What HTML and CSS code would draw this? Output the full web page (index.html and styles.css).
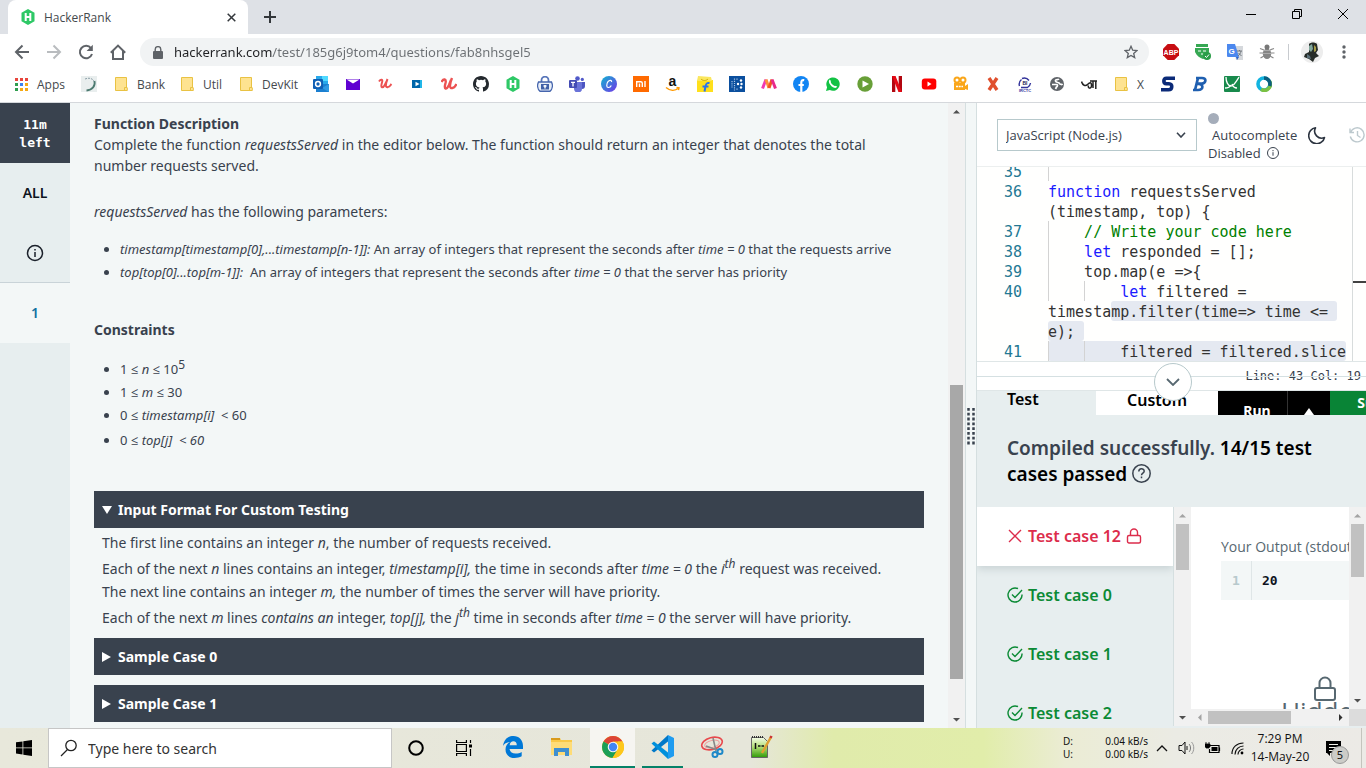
FILE: index.html
```html
<!DOCTYPE html>
<html lang="en">
<head>
<meta charset="utf-8">
<title>HackerRank</title>
<link rel="stylesheet" href="styles.css">
</head>
<body>
<div class="screen">
  <header class="browser">
    <div class="titlebar">
      <div class="tab">
        <svg class="i16" viewBox="0 0 16 16"><path d="M8 0l6.500 3.700v8.600L8 16l-6.500-3.700V3.700z" fill="#2ec866"/><path d="M5.700 4v8M10.300 4v8M5.700 8h4.600" stroke="#fff" stroke-width="2"/></svg>
        <span class="tab-title">HackerRank</span>
        <button class="plain" aria-label="Close tab"><svg width="9" height="9" viewBox="0 0 9 9"><path d="M.7.7l7.600 7.600M8.300.7L.7 8.300" stroke="#33373b" stroke-width="1.500"/></svg></button>
      </div>
      <button class="plain newtab" aria-label="New tab"><svg width="12" height="12" viewBox="0 0 12 12"><path d="M6 0v12M0 6h12" stroke="#33373b" stroke-width="2"/></svg></button>
      <div class="win">
        <button class="plain" aria-label="Minimize"><svg width="10" height="10" viewBox="0 0 10 10"><path d="M0 5.500h10" stroke="#000"/></svg></button>
        <button class="plain" aria-label="Restore"><svg width="10" height="10" viewBox="0 0 10 10" fill="none" stroke="#000"><path d="M.5 2.500h7v7h-7zM2.500 2.500v-2h7v7h-2"/></svg></button>
        <button class="plain" aria-label="Close"><svg width="10" height="10" viewBox="0 0 10 10"><path d="M0 0l10 10M10 0L0 10" stroke="#000"/></svg></button>
      </div>
    </div>
    <div class="toolbar">
      <nav class="navs">
        <button class="plain" aria-label="Back"><svg class="i16" viewBox="0 0 16 16" fill="none" stroke="#5f6368" stroke-width="2"><path d="M15 8H2M8.500 1.500L2 8l6.500 6.500"/></svg></button>
        <button class="plain" aria-label="Forward"><svg class="i16" viewBox="0 0 16 16" fill="none" stroke="#b9bcbf" stroke-width="2"><path d="M1 8h13M7.500 1.500L14 8l-6.500 6.500"/></svg></button>
        <button class="plain" aria-label="Reload"><svg class="i16" viewBox="0 0 16 16" fill="none" stroke="#5f6368" stroke-width="2"><path d="M13 4.200A6.200 6.200 0 1 0 14 10"/><path d="M14.800.8v6.200H8.600z" fill="#5f6368" stroke="none"/></svg></button>
        <button class="plain" aria-label="Home"><svg class="i16" viewBox="0 0 16 16" fill="none" stroke="#5f6368" stroke-width="2"><path d="M.8 8.800L8 1.600l7.200 7.200M3 7v8h10V7"/></svg></button>
      </nav>
      <div class="omni">
        <svg width="10" height="13" viewBox="0 0 10 13"><path d="M1 5h8a1 1 0 0 1 1 1v6a1 1 0 0 1-1 1H1a1 1 0 0 1-1-1V6a1 1 0 0 1 1-1z" fill="#5f6368"/><path d="M2.200 5V3.400a2.800 2.800 0 0 1 5.600 0V5" fill="none" stroke="#5f6368" stroke-width="1.400"/></svg>
        <input class="url" type="text" aria-label="Address" value="hackerrank.com/test/185g6j9tom4/questions/fab8nhsgel5">
        <button class="plain" aria-label="Bookmark"><svg width="14" height="14" viewBox="0 0 14 14"><path d="M7 1.300l1.700 3.900 4.200.4-3.200 2.800 1 4.200L7 10.400l-3.700 2.200 1-4.200L1.100 5.600l4.200-.4z" fill="none" stroke="#5f6368" stroke-width="1.300"/></svg></button>
      </div>
      <div class="exts">
        <svg class="i16" viewBox="0 0 16 16"><path d="M4.700 0h6.600L16 4.700v6.600L11.300 16H4.700L0 11.300V4.700z" fill="#c70d12"/><text x="8" y="10.700" font-size="7" font-weight="700" fill="#fff" text-anchor="middle">ABP</text></svg>
        <svg class="i16" viewBox="0 0 16 16"><path d="M1 0h12v3H1zM0 4h14v3c0 4-3 7-6 8-3-1-6-3-8-7z" fill="#36a853"/><path d="M3 7h3M8 7h3M7 9v2" stroke="#fff"/><circle cx="12" cy="12" r="4" fill="#2a9d48"/><path d="M10 12l1.500 1.500 2.500-3" fill="none" stroke="#fff"/></svg>
        <svg class="i16" viewBox="0 0 16 16"><path d="M6 2h10v14H9z" fill="#d5d8dc"/><path d="M0 0h8l4 13H1a1 1 0 0 1-1-1z" fill="#4c88ee"/><path d="M9 13l3 0-2 3z" fill="#2e62c8"/><text x="4.500" y="9.500" font-size="8" font-weight="700" fill="#fff" text-anchor="middle">G</text><path d="M10 7h5M12.500 6v1M14 7c0 2-2 4-3 5M11.500 9l3 3" stroke="#70777d" fill="none"/></svg>
        <svg class="i16" viewBox="0 0 16 16"><g stroke="#8a8a8a" stroke-width="1.200" fill="none"><path d="M5 6L1 4.500M4 9H.5M5 12l-3.500 2M11 6l4-1.500M12 9h3.500M11 12l3.500 2"/></g><ellipse cx="8" cy="9.800" rx="4.200" ry="5.200" fill="#858585"/><circle cx="8" cy="3" r="2.500" fill="#777"/><path d="M4 6.500h8M4 9.500h8" stroke="#bbb" stroke-width=".7"/></svg>
        <span class="vsep"></span>
        <svg class="avatar" viewBox="0 0 22 22"><circle cx="11" cy="11" r="11" fill="#ededed"/><path d="M8 3c2-2 6-2 8 0l1 6-2 3 3 3-4 2-2 4-4-3-5-2 1-3 4-2z" fill="#252b27"/><path d="M8 5l3-2 1 5-2 3-2-2z" fill="#7fa59a"/><path d="M13 4l2 2v4l-2 1z" fill="#a39a45"/><path d="M6 13l3 2 1 3-4-1z" fill="#5a6f78"/></svg>
        <svg class="dots" width="4" height="14" viewBox="0 0 4 14" fill="#5f6368"><circle cx="2" cy="2" r="1.700"/><circle cx="2" cy="7" r="1.700"/><circle cx="2" cy="12" r="1.700"/></svg>
      </div>
    </div>
    <nav class="bookmarks">
      <a class="bm apps" href="#"><svg class="i16" viewBox="0 0 16 16"><path d="M2 2h3v3H2zM7 2h3v3H7zM12 2h3v3h-3z" fill="#e8453c"/><path d="M2 7h3v3H2zM2 12h3v3H2z" fill="#2f9e4f"/><path d="M7 7h3v3H7z" fill="#3b82f0"/><path d="M12 7h3v3h-3zM7 12h3v3H7zM12 12h3v3h-3z" fill="#f5a913"/></svg>Apps</a>
      <a class="bm" href="#" aria-label="Spinner"><svg class="i16" viewBox="0 0 16 16"><path d="M0 0h16v16H0z" fill="#e9eeee"/><path d="M4 3c5-2 9 0 9.500 4" fill="none" stroke="#8da0a8" stroke-dasharray="2 1"/><path d="M13.500 5c1 5-2 9-8 9.500" fill="none" stroke="#4c7a70" stroke-width="1.800"/></svg></a>
      <a class="bm folder bank" href="#"><svg class="i16" viewBox="0 0 16 16"><path d="M2.500 1.500h11V11l.8 1v2.500H2.500z" fill="#fee391" stroke="#e9c243"/><path d="M11.500 14.500v-3h2.500" fill="none" stroke="#e9c243"/></svg>Bank</a>
      <a class="bm folder util" href="#"><svg class="i16" viewBox="0 0 16 16"><path d="M2.500 1.500h11V11l.8 1v2.500H2.500z" fill="#fee391" stroke="#e9c243"/><path d="M11.500 14.500v-3h2.500" fill="none" stroke="#e9c243"/></svg>Util</a>
      <a class="bm folder devkit" href="#"><svg class="i16" viewBox="0 0 16 16"><path d="M2.500 1.500h11V11l.8 1v2.500H2.500z" fill="#fee391" stroke="#e9c243"/><path d="M11.500 14.500v-3h2.500" fill="none" stroke="#e9c243"/></svg>DevKit</a>
      <a class="bm" href="#" aria-label="Outlook"><svg class="i16" viewBox="0 0 16 16"><path d="M3 0h12v8H3z" fill="#28a8ea"/><path d="M9 0h6v5H9z" fill="#50d9ff"/><path d="M3 8h13v8H3z" fill="#1b7fd0"/><path d="M16 8v8L9 12z" fill="#2f9ae3"/><rect y="3" width="10" height="10" rx="1" fill="#0f5fb5"/><circle cx="5" cy="8" r="2.400" fill="none" stroke="#fff" stroke-width="1.500"/></svg></a>
      <a class="bm" href="#" aria-label="Mail"><svg class="i16" viewBox="0 0 16 16"><path d="M1 3h14v11H1z" fill="#5f01d1"/><path d="M1.500 3.500h13L8 7.500z" fill="#fff"/></svg></a>
      <a class="bm" href="#" aria-label="Udemy"><svg class="i16" viewBox="0 0 16 16"><path d="M2 5.500c2-3 4-2 3 1-2 6 1 6 3 2l2-4M10.500 3c-2.500 6-2 9 .5 8 2 0 2.500-2 3.500-3" fill="none" stroke="#ec5252" stroke-width="2"/></svg></a>
      <a class="bm" href="#" aria-label="Video"><svg class="i16" viewBox="0 0 16 16"><path d="M3 4h10v8H3z" fill="#06a"/><path d="M11 4h2v8h-2z" fill="#21b6e8"/><path d="M6.500 5.800L10.500 8l-4 2.200z" fill="#fff"/></svg></a>
      <a class="bm" href="#" aria-label="Udemy courses"><svg class="i16" viewBox="0 0 16 16"><path d="M.5 6c2-4 5-3 4 1-2 7 1 7 3.500 2l2-5M11 2c-3 7-2.500 11 .5 10 2 0 3-2 4-4" fill="none" stroke="#ec5252" stroke-width="2.400"/></svg></a>
      <a class="bm" href="#" aria-label="GitHub"><svg class="i16" viewBox="0 0 16 16"><path fill="#24292e" d="M8 0C3.580 0 0 3.580 0 8c0 3.540 2.290 6.530 5.470 7.590.4.070.55-.17.55-.38 0-.19-.01-.82-.01-1.490-2.010.37-2.530-.49-2.690-.94-.09-.23-.48-.94-.82-1.130-.28-.15-.68-.52-.01-.53.63-.01 1.080.58 1.230.82.72 1.210 1.870.87 2.330.66.07-.52.28-.87.51-1.070-1.780-.2-3.640-.89-3.640-3.950 0-.87.31-1.590.82-2.150-.08-.2-.36-1.020.08-2.120 0 0 .67-.21 2.200.82a7.600 7.600 0 0 1 4 0c1.530-1.040 2.200-.82 2.200-.82.44 1.100.16 1.920.08 2.120.51.56.82 1.270.82 2.150 0 3.070-1.870 3.750-3.650 3.950.29.25.54.73.54 1.480 0 1.070-.01 1.930-.01 2.200 0 .21.15.46.55.38A8.010 8.010 0 0 0 16 8c0-4.420-3.580-8-8-8z"/></svg></a>
      <a class="bm" href="#" aria-label="HackerRank"><svg class="i16" viewBox="0 0 16 16"><path d="M8 0l6.500 3.700v8.600L8 16l-6.500-3.700V3.700z" fill="#2ec866"/><path d="M5.700 4v8M10.300 4v8M5.700 8h4.600" stroke="#fff" stroke-width="2"/></svg></a>
      <a class="bm" href="#" aria-label="Vault"><svg class="i16" viewBox="0 0 16 16"><path d="M4.500 6V4.200a3.500 3.500 0 0 1 7 0V6" fill="none" stroke="#5674b9" stroke-width="1.800"/><path d="M1.500 6h13c1.500 3 1 7-1.500 9.300H3C.5 13 0 9 1.500 6z" fill="#e8eef8" stroke="#4565ad" stroke-width="1.400"/><path d="M4 8h8v5.500H4z" fill="#4060a8"/><path d="M8 9v3.500M6.500 10h3" stroke="#fff" stroke-width="1.400"/></svg></a>
      <a class="bm" href="#" aria-label="Teams"><svg class="i16" viewBox="0 0 16 16"><circle cx="8.500" cy="2.500" r="2.300" fill="#5059c9"/><circle cx="13.300" cy="3.400" r="1.600" fill="#5059c9"/><path d="M5 6h8v6a4 4 0 0 1-8 1z" fill="#6a73d8"/><path d="M13 6h3v4c0 2-1 3-3 3z" fill="#4c55c2"/><rect y="4" width="8" height="8" rx="1" fill="#434bb4"/><path d="M2 6.300h4M4 6v4.500" stroke="#fff" stroke-width="1.300"/></svg></a>
      <a class="bm" href="#" aria-label="Canva"><svg class="i16" viewBox="0 0 16 16"><defs><linearGradient id="cv" x2="1" y2="1"><stop offset="0" stop-color="#0fb5d0"/><stop offset="1" stop-color="#7434e8"/></linearGradient></defs><circle cx="8" cy="8" r="8" fill="url(#cv)"/><path d="M10.500 6c.5-2-2-2.300-3.500-.3-2 2.800-1.500 6 .5 5.800 1.300-.1 2.300-1 2.800-2" fill="none" stroke="#fff" stroke-width="1.200"/></svg></a>
      <a class="bm" href="#" aria-label="Mi"><svg class="i16" viewBox="0 0 16 16"><path d="M0 0h16v16H0z" fill="#ff6a00"/><path d="M3.700 11V5.700h4c1 0 1.600.5 1.600 1.600V11M6.500 7.500V11M12 5v6" stroke="#fff" stroke-width="1.400" fill="none"/></svg></a>
      <a class="bm" href="#" aria-label="Amazon"><svg class="i16" viewBox="0 0 16 16"><text x="7.500" y="10" font-size="14" font-weight="700" fill="#111" text-anchor="middle">a</text><path d="M1 11.500c4 3.500 9 3.500 12.500.8M11.500 11.500l2.500.3-.5 2.400" stroke="#f90" stroke-width="1.400" fill="none"/></svg></a>
      <a class="bm" href="#" aria-label="Flipkart"><svg class="i16" viewBox="0 0 16 16"><path d="M0 4h16v12H0z" fill="#ffe01b"/><path d="M1 0l13 1 1 4H0z" fill="#fbe75e"/><path d="M4 3c2 2 5 2 7 0" stroke="#c9a800" fill="none"/><path d="M12.500 7c-3-.5-3.500 1-4 3.500l-1 5M5.500 10.500h6" stroke="#2874f0" stroke-width="2" fill="none"/></svg></a>
      <a class="bm" href="#" aria-label="Dots"><svg class="i16" viewBox="0 0 16 16"><path d="M0 0h16v16H0z" fill="#0b4f9e"/><path d="M3 5v7M5.500 2.500v12M8 2.500v2M8 12.500v2" stroke="#a8c4e4" stroke-width="1.200" stroke-dasharray="1.200 1"/><circle cx="9" cy="8" r="1.200" fill="#fff"/><circle cx="12" cy="4.500" r="1.200" fill="#fff"/><circle cx="12.500" cy="8" r="1.200" fill="#fff"/><circle cx="12" cy="11.500" r="1.200" fill="#fff"/></svg></a>
      <a class="bm" href="#" aria-label="Myntra"><svg class="i16" viewBox="0 0 16 16"><path d="M1.500 12.500L5 3.500" stroke="#f13ab1" stroke-width="3"/><path d="M5 3.500l3 8.500" stroke="#fd913c" stroke-width="3"/><path d="M8 12l3-8.500" stroke="#f05524" stroke-width="3"/><path d="M11 3.500l3.500 9" stroke="#e82a8a" stroke-width="3"/></svg></a>
      <a class="bm" href="#" aria-label="Facebook"><svg class="i16" viewBox="0 0 16 16"><circle cx="8" cy="8" r="8" fill="#1285f3"/><path d="M11.200 4.200C8.800 3.700 8.300 5 8.300 7v9M5.500 9h5.300" stroke="#fff" stroke-width="2.200" fill="none"/></svg></a>
      <a class="bm" href="#" aria-label="WhatsApp"><svg class="i16" viewBox="0 0 16 16"><path d="M1 15l1.100-3.700A6.700 6.700 0 1 1 4.800 14z" fill="#12c244"/><path d="M5.300 4.300c-1.300 1.200 0 3.600 1.800 5.200 1.600 1.400 3.500 2 4.400.8" fill="none" stroke="#fff" stroke-width="1.900"/></svg></a>
      <a class="bm" href="#" aria-label="Player"><svg class="i16" viewBox="0 0 16 16"><circle cx="8" cy="8" r="7.700" fill="#689f38"/><path d="M5.500 4.500L12 8l-6.500 3.500z" fill="#fff"/></svg></a>
      <a class="bm" href="#" aria-label="Netflix"><svg class="i16" viewBox="0 0 16 16"><path d="M3 0h3.300v16H3zM9.700 0H13v16H9.700z" fill="#b20710"/><path d="M3 0h3.500L13 16H9.500z" fill="#e50914"/></svg></a>
      <a class="bm" href="#" aria-label="YouTube"><svg class="i16" viewBox="0 0 16 16"><rect x=".8" y="2.500" width="14.500" height="11" rx="3" fill="#f00"/><path d="M6.500 5.500L10.500 8l-4 2.500z" fill="#fff"/></svg></a>
      <a class="bm" href="#" aria-label="Movies"><svg class="i16" viewBox="0 0 16 16"><circle cx="4" cy="4" r="2.500" fill="none" stroke="#faa61a" stroke-width="2"/><circle cx="10" cy="4" r="2.500" fill="none" stroke="#faa61a" stroke-width="2"/><path d="M1 7h11v7H1zM12 10l3-2v6l-3-1z" fill="#faa61a"/><path d="M3 10.500h7" stroke="#fff" stroke-width="1.500" stroke-dasharray="2 .7"/></svg></a>
      <a class="bm" href="#" aria-label="X"><svg class="i16" viewBox="0 0 16 16"><path d="M4 2l8 12M12 2L4 14" stroke="#e0502e" stroke-width="3.400"/></svg></a>
      <a class="bm" href="#" aria-label="IRCTC"><svg class="i16" viewBox="0 0 16 16"><path d="M5 2.500a6 6 0 0 1 7 2M2.500 10a6 6 0 0 1 2-6.500M13.500 7a6 6 0 0 1-3 4.500H4" fill="none" stroke="#32329a" stroke-width="1.400"/><text x="8" y="8.500" font-size="5" font-weight="700" fill="#225" text-anchor="middle">BI</text><text x="8" y="16" font-size="4" font-weight="700" fill="#32329a" text-anchor="middle">IRCTC</text></svg></a>
      <a class="bm" href="#" aria-label="Globe"><svg class="i16" viewBox="0 0 16 16"><circle cx="8" cy="8" r="7" fill="#5f6368"/><path d="M10 3c-1 1-4 0-3.500 2S10 6 10.500 7.500 13 8 13.500 9M3 8.500h4.500c1.500 0 1 2 0 2.500L6.500 13" fill="none" stroke="#fff" stroke-width="1.700"/></svg></a>
      <a class="bm" href="#" aria-label="Script"><svg class="i16" viewBox="0 0 16 16"><path d="M.5 5.500c1 4 4 5 6 3s4-3 4 1-4 3-3 0M9 5h7M12 5v7M14.800 5v8" fill="none" stroke="#222" stroke-width="1.500"/></svg></a>
      <a class="bm folder xf" href="#"><svg class="i16" viewBox="0 0 16 16"><path d="M2.500 1.500h11V11l.8 1v2.500H2.500z" fill="#fee391" stroke="#e9c243"/><path d="M11.500 14.500v-3h2.500" fill="none" stroke="#e9c243"/></svg>X</a>
      <a class="bm" href="#" aria-label="S"><svg class="i16" viewBox="0 0 16 16"><path d="M15 2.200H6.500C3 2.200 3 7.500 6.500 7.800h2.500c4 0 3.500 6-.5 6H1" fill="none" stroke="#0b2a78" stroke-width="3.600"/></svg></a>
      <a class="bm" href="#" aria-label="B"><svg class="i16" viewBox="0 0 16 16"><path d="M4 2h6c5 0 4 5 0 5.700H5c7 0 7 6.300 1 6.300H1M6 2L3 14" fill="none" stroke="#1f5fb0" stroke-width="2.700"/></svg></a>
      <a class="bm" href="#" aria-label="W"><svg class="i16" viewBox="0 0 16 16"><rect width="16" height="16" rx="1" fill="#188a4c"/><path d="M2 1c0 5 2 9 5 9s5-4 8-9M8 8c1 3 3 4 5 4M1 12c3 0 5-1 6-3" fill="none" stroke="#fff" stroke-width="1.300"/></svg></a>
      <a class="bm" href="#" aria-label="Webex"><svg class="i16" viewBox="0 0 16 16"><circle cx="8" cy="8" r="6" fill="#fff" stroke="#12b4e0" stroke-width="3.600"/><path d="M13.300 5A6 6 0 0 1 5 13.300" fill="none" stroke="#7bc143" stroke-width="3.600"/><path d="M8 2a6 6 0 0 1 5.600 8" fill="none" stroke="#0c5e7e" stroke-width="3.600"/></svg></a>
    </nav>
  </header>

  <main class="app">
    <aside class="rail">
      <div class="timer">11m<br>left</div>
      <a class="rail-item" href="#">ALL</a>
      <button class="rail-item info" aria-label="Info"><svg width="18" height="18" viewBox="0 0 18 18" fill="none" stroke="#1b212b" stroke-width="1.500"><circle cx="9" cy="9" r="7.500"/><path d="M9 8v5M9 5v1.500"/></svg></button>
      <a class="rail-item current" href="#">1</a>
    </aside>

    <section class="problem">
      <div class="statement">
        <h3>Function Description</h3>
        <p>Complete the function <i>requestsServed</i> in the editor below. The function should return an integer that denotes the total<br>number requests served.</p>
        <p class="params"><i>requestsServed</i> has the following parameters:</p>
        <ul>
          <li><i>timestamp[timestamp[0],...timestamp[n-1]]:</i> An array of integers that represent the seconds after <i>time = 0</i> that the requests arrive</li>
          <li><i>top[top[0]...top[m-1]]:</i>&nbsp; An array of integers that represent the seconds after <i>time = 0</i> that the server has priority</li>
        </ul>
        <h3 class="constraints">Constraints</h3>
        <ul>
          <li>1 ≤ <i>n</i> ≤ 10<sup>5</sup></li>
          <li>1 ≤ <i>m</i> ≤ 30</li>
          <li>0 ≤ <i>timestamp[i]</i>&nbsp; &lt; 60</li>
          <li class="last">0 ≤ <i>top[j]&nbsp; &lt; 60</i></li>
        </ul>
        <details class="case" open>
          <summary><svg width="10" height="10" viewBox="0 0 10 10"><path d="M0 1h10L5 9z" fill="#fff"/></svg>Input Format For Custom Testing</summary>
          <div class="case-body">
            <p>The first line contains an integer <i>n</i>, the number of requests received.</p>
            <p class="tall">Each of the next <i>n</i> lines contains an integer, <i>timestamp[i],</i> the time in seconds after <i>time = 0</i> the <i>i<sup>th</sup></i> request was received.</p>
            <p>The next line contains an integer <i>m,</i> the number of times the server will have priority.</p>
            <p class="tall">Each of the next <i>m</i> lines <i>contains an</i> integer, <i>top[j],</i> the <i>j<sup>th</sup></i> time in seconds after <i>time = 0</i> the server will have priority.</p>
          </div>
        </details>
        <details class="case"><summary><svg width="10" height="10" viewBox="0 0 10 10"><path d="M0 0l9 5-9 5z" fill="#fff"/></svg>Sample Case 0</summary></details>
        <details class="case"><summary><svg width="10" height="10" viewBox="0 0 10 10"><path d="M0 0l9 5-9 5z" fill="#fff"/></svg>Sample Case 1</summary></details>
      </div>
      <div class="vbar">
        <svg class="arr" viewBox="0 0 17 17"><path d="M5 10.500h7L8.500 7z" fill="#505050"/></svg>
        <div class="track"><div class="gap-main"></div><div class="thumb dark main-thumb"></div></div>
        <svg class="arr" viewBox="0 0 17 17"><path d="M5 7h7l-3.500 3.500z" fill="#505050"/></svg>
      </div>
    </section>

    <div class="splitter"><svg width="8" height="37" viewBox="0 0 8 37"><path d="M1.500 0v37M6.500 0v37" stroke="#39424e" stroke-width="2.500" stroke-dasharray="2.800 2"/></svg></div>

    <section class="work">
      <div class="tools">
        <div class="lang"><select aria-label="Language"><option>JavaScript (Node.js)</option></select><svg width="10" height="6" viewBox="0 0 10 6"><path d="M1 .8L5 5l4-4.200" fill="none" stroke="#39424e" stroke-width="1.600"/></svg></div>
        <div class="auto">
          <span class="knob"></span>
          <span class="auto-a">Autocomplete</span>
          <span class="auto-b">Disabled <svg width="12" height="12" viewBox="0 0 12 12" fill="none" stroke="#39424e"><circle cx="6" cy="6" r="5.500"/><path d="M6 5.200v3.500M6 3v1.200"/></svg></span>
        </div>
        <button class="plain moon" aria-label="Theme"><svg width="18" height="18" viewBox="0 0 18 18"><path d="M7.500 1.800A7 7 0 0 0 16.500 11.500 8 8 0 1 1 7.500 1.800z" fill="none" stroke="#2c3440" stroke-width="1.600" stroke-linejoin="round"/></svg></button>
        <button class="plain hist" aria-label="History"><svg width="16" height="16" viewBox="0 0 16 16" fill="none" stroke="#bdc9ce" stroke-width="1.400"><path d="M1 1.500v4h4M1.500 5.500A7 7 0 1 1 1.300 9.500M8.500 4v4.500l3 2"/></svg></button>
      </div>
      <div class="editor">
        <div class="code">
          <div class="row"><span class="ln">35</span><span class="src"><span class="ind"></span></span></div>
          <div class="row"><span class="ln">36</span><span class="src"><b>function</b> requestsServed</span></div>
          <div class="row"><span class="ln"></span><span class="src">(timestamp, top) {</span></div>
          <div class="row"><span class="ln">37</span><span class="src"><span class="ind"></span><em>// Write your code here</em></span></div>
          <div class="row"><span class="ln">38</span><span class="src"><span class="ind"></span><b>let</b> responded = [];</span></div>
          <div class="row"><span class="ln">39</span><span class="src"><span class="ind"></span>top.map(e =&gt;{</span></div>
          <div class="row"><span class="ln">40</span><span class="src"><span class="ind"></span><span class="ind"></span><b>let</b> filtered =</span></div>
          <div class="row"><span class="ln"></span><span class="src">timesta<mark>mp.filter(time=&gt; time &lt;= </mark></span></div>
          <div class="row"><span class="ln"></span><span class="src"><mark>e); </mark></span></div>
          <div class="row"><span class="ln">41</span><span class="src"><mark><span class="ind"></span><span class="ind"></span>filtered = filtered.slice</mark></span></div>
        </div>
        <div class="minimap"><span></span></div>
      </div>
      <div class="status">
        <span class="pos">Line: 43 Col: 19</span>
        <span class="rule"></span>
        <button class="collapse" aria-label="Collapse"><svg width="14" height="8" viewBox="0 0 14 8"><path d="M1 1l6 6 6-6" fill="none" stroke="#576871" stroke-width="1.800"/></svg></button>
      </div>
      <div class="tabs">
        <button class="t-test">Test Results</button>
        <button class="t-custom">Custom Input</button>
        <button class="t-run">Run</button>
        <button class="t-up" aria-label="More run options"><svg width="10" height="8" viewBox="0 0 10 8"><path d="M0 8l5-7 5 7z" fill="#fff"/></svg></button>
        <button class="t-submit">Submit</button>
      </div>
      <div class="verdict"><span>Compiled successfully.</span> 14/15 test cases passed <svg width="19" height="19" viewBox="0 0 19 19" fill="none" stroke="#39424e" stroke-width="1.500"><circle cx="9.500" cy="9.500" r="8.700"/><path d="M6.800 7.500c0-3.500 5.400-3.500 5.400-.3 0 2-2.700 1.800-2.700 4M9.500 12.500v1.800"/></svg></div>
      <div class="results">
        <ul class="cases">
          <li class="fail"><a href="#"><svg width="16" height="16" viewBox="0 0 16 16" stroke="#dc2c4b" stroke-width="1.400"><path d="M2 2l12 12M14 2L2 14"/></svg>Test case 12<svg width="16" height="16" viewBox="0 0 16 16" fill="none" stroke="#dc2c4b" stroke-width="1.400"><rect x="1.500" y="7.500" width="13" height="7.500" rx="1.500"/><path d="M4.500 7.500V4.500a3.500 3.500 0 0 1 7 0v3"/></svg></a></li>
          <li><a href="#"><svg width="16" height="16" viewBox="0 0 16 16" fill="none" stroke="#0b8a35" stroke-width="1.400"><path d="M15 7.500A7 7 0 1 1 11 1.700M5 7.500l3 3L15 3"/></svg>Test case 0</a></li>
          <li><a href="#"><svg width="16" height="16" viewBox="0 0 16 16" fill="none" stroke="#0b8a35" stroke-width="1.400"><path d="M15 7.500A7 7 0 1 1 11 1.700M5 7.500l3 3L15 3"/></svg>Test case 1</a></li>
          <li><a href="#"><svg width="16" height="16" viewBox="0 0 16 16" fill="none" stroke="#0b8a35" stroke-width="1.400"><path d="M15 7.500A7 7 0 1 1 11 1.700M5 7.500l3 3L15 3"/></svg>Test case 2</a></li>
        </ul>
        <div class="vbar">
          <svg class="arr" viewBox="0 0 17 17"><path d="M5 10.500h7L8.500 7z" fill="#a3a3a3"/></svg>
          <div class="track"><div class="thumb list-thumb"></div></div>
          <svg class="arr" viewBox="0 0 17 17"><path d="M5 7h7l-3.500 3.500z" fill="#505050"/></svg>
        </div>
        <div class="out-wrap">
          <div class="out">
            <div class="out-inner">
              <div class="out-label">Your Output (stdout)</div>
              <div class="out-box"><span class="out-n">1</span><span class="out-v">20</span></div>
              <div class="hidden-case"><svg width="24" height="26" viewBox="0 0 24 26" fill="none" stroke="#576871" stroke-width="2"><rect x="2" y="12" width="20" height="12" rx="2"/><path d="M6.500 12V7a5.500 5.500 0 0 1 11 0v5"/></svg><span>Hidden</span></div>
            </div>
          </div>
          <div class="vbar">
            <svg class="arr" viewBox="0 0 17 17"><path d="M5 10.500h7L8.500 7z" fill="#a3a3a3"/></svg>
            <div class="track"><div class="thumb out-thumb"></div></div>
            <svg class="arr" viewBox="0 0 17 17"><path d="M5 7h7l-3.500 3.500z" fill="#505050"/></svg>
          </div>
          <div class="hbar">
            <svg class="arr" viewBox="0 0 17 17"><path d="M10.500 5v7L7 8.500z" fill="#a3a3a3"/></svg>
            <div class="htrack"><div class="hthumb"></div></div>
            <svg class="arr" viewBox="0 0 17 17"><path d="M7 5v7l3.500-3.500z" fill="#303030"/></svg>
          </div>
          <div class="corner"></div>
        </div>
      </div>
    </section>
  </main>

  <footer class="taskbar">
    <button class="plain start" aria-label="Start"><svg class="i16" viewBox="0 0 16 16"><path d="M0 2.300L6.500 1.400v6.100H0zM7.300 1.300L16 0v7.500H7.300zM0 8.300h6.500v6.200L0 13.600zM7.300 8.300H16V16l-8.700-1.300z" fill="#000"/></svg></button>
    <label class="search"><svg width="18" height="18" viewBox="0 0 18 18" fill="none" stroke="#222" stroke-width="1.300"><circle cx="11" cy="6.500" r="5.200"/><path d="M7.500 10.500L1 17"/></svg><input type="text" placeholder="Type here to search" aria-label="Type here to search"></label>
    <button class="plain task" aria-label="Cortana"><svg class="i16" viewBox="0 0 16 16"><circle cx="8" cy="8" r="6.800" fill="none" stroke="#000" stroke-width="2"/></svg></button>
    <button class="plain task" aria-label="Task view"><svg class="i16" viewBox="0 0 16 16" fill="none" stroke="#000" stroke-width="1.200"><path d="M.6 4.500h9.800v7H.6zM.6 0v2.500h9.800V0M.6 16v-2.500h9.800V16M14.500 0v3M14.500 9v7"/><path d="M13 4.500h3v3h-3z" fill="#000" stroke="none"/></svg></button>
    <button class="plain task app-b" aria-label="Edge"><svg width="20" height="22" viewBox="0 0 20 22"><path d="M0 10C1 3 5 0 10.500 0 16 0 20 4 20 10v3H6.500c.5 3 3 4.500 6 4.500 2.500 0 4.500-.6 6.200-1.600v4.400C16.700 21.400 14.200 22 11.500 22 6 22 2.500 18.500 2.500 13.500c0-3.500 1.700-6 4.500-7.500-3.500.3-6 2-7 4zm6.600-.8h7.200c0-2.500-1.300-3.900-3.400-3.900-2 0-3.400 1.400-3.800 3.900z" fill="#0078d7"/></svg></button>
    <button class="plain task app-b" aria-label="Explorer"><svg width="21" height="18" viewBox="0 0 21 18"><path d="M0 0h9l1 2h11v15H0z" fill="#f9c846"/><path d="M0 0h9v2H0z" fill="#d99a1c"/><path d="M0 4h21v13H0z" fill="#fedc77"/><path d="M3 10h15v8h-4v-4H7v4H3z" fill="#3f8fd0"/></svg></button>
    <button class="plain task app-b on chrome" aria-label="Chrome"><svg width="22" height="22" viewBox="0 0 22 22"><circle cx="11" cy="11" r="11" fill="#fbc116"/><path d="M11 11L1.500 5.500A11 11 0 0 1 20.500 5.500H11z" fill="#dc4437"/><path d="M1.500 5.500A11 11 0 0 0 10.500 22L16 13l-5-2z" fill="#1b9f58"/><path d="M20.500 5.500A11 11 0 0 1 10.500 22l5.500-9V5.500z" fill="#fdc71c"/><circle cx="11" cy="11" r="5.300" fill="#f7f7f7"/><circle cx="11" cy="11" r="4.200" fill="#4285f4"/></svg></button>
    <button class="plain task app-b on" aria-label="VS Code"><svg width="24" height="24" viewBox="0 0 24 24"><path d="M17 0l6 3v18l-6 3z" fill="#1f9cf0"/><path d="M17 0v6.500L3 17.500l-2.500-2z" fill="#0078c8"/><path d="M17 24v-6.500L3 6.500l-2.500 2z" fill="#0090dc"/></svg></button>
    <button class="plain task app-b" aria-label="Snipping tool"><svg width="24" height="22" viewBox="0 0 24 22" fill="none"><ellipse cx="12" cy="7.500" rx="10.500" ry="6" transform="rotate(-15 12 7.500)" stroke="#e8484c" stroke-width="1.600"/><ellipse cx="12" cy="8" rx="7.500" ry="3.500" transform="rotate(-15 12 8)" stroke="#ef9a9a"/><path d="M13 2l3 13M6 10l11 4" stroke="#888" stroke-width="1.600"/><circle cx="15" cy="18.500" r="2.500" stroke="#1e88c8" stroke-width="2"/><circle cx="20" cy="15.500" r="2.500" stroke="#1e88c8" stroke-width="2"/></svg></button>
    <button class="plain task app-b" aria-label="Notepad"><svg width="24" height="24" viewBox="0 0 24 24"><defs><linearGradient id="np" x2="0" y2="1"><stop offset="0" stop-color="#f4fbe8"/><stop offset=".45" stop-color="#b5e07a"/><stop offset="1" stop-color="#2f9a06"/></linearGradient></defs><path d="M2.500 2.500h12l4 4v16h-16z" fill="url(#np)" stroke="#666"/><path d="M3 2h12" stroke="#333" stroke-width="2" stroke-dasharray="1 1"/><path d="M6.500 8v6M9 11h2.500M12.500 11h2.500" stroke="#111" stroke-width="1.500"/><path d="M13 18L22 2" stroke="#e0a030" stroke-width="2.500"/><path d="M21.500 3l1-2" stroke="#c33" stroke-width="2.500"/></svg></button>
    <div class="net"><span>D:</span><span>0.04 kB/s</span><span>U:</span><span>0.00 kB/s</span></div>
    <div class="tray">
      <svg width="12" height="7" viewBox="0 0 12 7"><path d="M1 6l5-5 5 5" fill="none" stroke="#111" stroke-width="1.300"/></svg>
      <svg width="17" height="14" viewBox="0 0 17 14" fill="none" stroke="#111"><path d="M1 4.500h3l3-3.500v12L4 9.500H1z"/><path d="M9 5v4"/><path d="M11 3c2 2 2 6 0 8" stroke="#777"/><path d="M13.500 1c3 3 3 9 0 12" stroke="#999"/></svg>
      <svg width="16" height="12" viewBox="0 0 16 12"><path d="M5 3.500h9v7H4.500V7M14.500 5.500V9" fill="none" stroke="#000" stroke-width="1.200"/><path d="M6.500 5h6v4h-6z" fill="#000"/><path d="M0 2h5v3H4v1H1V5H0zM1 0v2M4 0v2" fill="#000" stroke="#000" stroke-width=".8"/></svg>
      <svg width="13" height="13" viewBox="0 0 13 13" fill="none" stroke="#111" stroke-width="1.200"><path d="M1 12C1 5 6 1 12.500 1M4 12.500C4 7.500 8 4 12.500 4M7 12.500C7 9.500 9.500 7 12.500 7"/><circle cx="11" cy="11" r="1.400" fill="#000" stroke="none"/></svg>
    </div>
    <div class="clock">7:29 PM<br>14-May-20</div>
    <div class="notif"><svg width="18" height="18" viewBox="0 0 18 18"><path d="M1 1h15v12H5v3l-3-3H1z" fill="#000"/><path d="M4 4.500h9M4 7.500h9M4 10.500h5" stroke="#f0f0e8"/></svg><span class="count">5</span></div>
  </footer>
</div>
</body>
</html>
```
FILE: styles.css
```css
* { box-sizing: border-box; }
html, body { height: 100%; }
body { margin: 0; font-family: "Noto Sans", "Open Sans", sans-serif; color: #39424e; overflow: hidden; }
a { color: inherit; text-decoration: none; }
button, input, select { font: inherit; color: inherit; }
svg { flex: none; display: block; }
.plain { border: 0; background: none; padding: 0; display: flex; align-items: center; justify-content: center; flex: none; }
.i16 { width: 16px; height: 16px; }
.screen { height: 100vh; display: flex; flex-direction: column; }

/* Browser frame */
.browser { flex: none; background: #fff; border-bottom: 1px solid #d5d8dc; }
.titlebar { height: 34px; background: #dee1e6; display: flex; align-items: stretch; padding-left: 8px; }
.tab { width: 240px; background: #fff; border-radius: 8px 8px 0 0; display: flex; align-items: center; padding: 0 12px; gap: 8px; font-family: "Open Sans", sans-serif; font-size: 12px; }
.tab-title { flex: 1; color: #45494d; }
.newtab { margin-left: 16px; width: 12px; }
.win { margin-left: auto; display: flex; padding-bottom: 6px; }
.win .plain { width: 46px; }
.toolbar { height: 34px; display: flex; align-items: center; padding-top: 2px; }
.navs { display: flex; gap: 16px; padding: 0 14px; }
.omni { flex: 1; height: 28px; background: #f1f3f4; border-radius: 14px; display: flex; align-items: center; padding: 0 11px 0 13px; gap: 11px; }
.url { flex: 1; min-width: 0; border: 0; outline: 0; padding: 0; font-family: "Noto Sans", sans-serif; font-size: 13px; color: transparent; background: linear-gradient(90deg, #202124 98px, #6b6f73 98px); -webkit-background-clip: text; background-clip: text; }
.exts { display: flex; align-items: center; gap: 16px; padding: 0 20px 0 14px; }
.exts text { font-family: "Liberation Sans", sans-serif; }
.vsep { width: 1px; height: 16px; background: #c8cbcf; margin: 0 -4px 0 -3px; }
.avatar { width: 22px; height: 22px; }
.dots { margin-left: 3px; }
.bookmarks { height: 34px; display: flex; align-items: center; gap: 16px; padding: 0 13px 2px; font-family: "Open Sans", sans-serif; font-size: 12px; color: #45494d; }
.bm { display: flex; align-items: center; gap: 8px; flex: none; white-space: nowrap; }
.bm text { font-family: "Liberation Sans", sans-serif; }
.apps { width: 52px; }
.bank { width: 50px; }
.util { width: 43px; }
.devkit { width: 59px; }
.xf { width: 31px; }

/* Application */
.app { flex: 1; min-height: 0; display: flex; background: #f3f7f7; }
.rail { flex: none; width: 70px; background: #e7eeef; display: flex; flex-direction: column; }
.timer { height: 60px; background: #39424e; color: #fff; font: bold 13px/18px "DejaVu Sans Mono", monospace; text-align: center; padding-top: 13px; }
.rail-item { height: 60px; display: flex; align-items: center; justify-content: center; font-size: 14px; font-weight: 600; color: #0e141e; border: 0; background: none; padding: 0 0 2px; }
.info { border-bottom: 1px solid #c9d3d8; padding: 0; }
.current { background: #f3f7f7; color: #1270a0; }

.problem { flex: 1; min-width: 0; display: flex; overflow: hidden; }
.statement { flex: 1; min-width: 0; padding: 10px 24px 0; overflow: hidden; font-size: 14px; line-height: 21px; color: #39424e; }
.statement h3 { margin: 0; font-size: 14px; font-weight: 700; }
.statement p { margin: 0; white-space: nowrap; }
.statement .params { margin-top: 25px; }
.statement ul { margin: 16px 0 0; padding-left: 26px; font-size: 13px; line-height: 23px; white-space: nowrap; }
.statement sup { font-size: 12px; line-height: 0; }
.statement .constraints { margin-top: 35px; }
.statement .constraints + ul { margin: 18px 0 39px; }
.last { margin-top: 2px; }
.case { margin-bottom: 10px; }
.case summary { height: 37px; background: #39424e; color: #fff; font-weight: 700; display: flex; align-items: center; gap: 6px; padding: 0 8px; list-style: none; }
.case-body { padding: 3px 8px 9px; line-height: 23px; }
.case[open] { margin-bottom: 0; }
.statement .tall { padding-top: 3px; }

.vbar { flex: none; width: 17px; background: #f1f1f1; display: flex; flex-direction: column; }
.arr { width: 17px; height: 17px; }
.track { flex: 1; min-height: 0; display: flex; flex-direction: column; align-items: center; }
.gap-main { flex: 265; }
.thumb { width: 13px; background: #c1c1c1; }
.dark { background: #a8a8a8; }
.main-thumb { flex: 294; margin-bottom: 32px; }
.list-thumb { height: 46px; }
.out-thumb { height: 53px; }
.splitter { flex: none; width: 12px; border: solid #d5dfe0; border-width: 0 1px; display: flex; align-items: center; justify-content: center; padding-top: 21px; }

.work { flex: none; width: 389px; display: flex; flex-direction: column; overflow: hidden; background: #fff; }
.tools { flex: none; height: 64px; display: flex; align-items: center; padding-left: 20px; overflow: hidden; font-family: "Open Sans", sans-serif; font-size: 13px; border-bottom: 1px solid #ecefef; box-shadow: 0 1px 4px #e4e8e8; }
.lang { flex: none; width: 200px; height: 32px; display: flex; align-items: center; border: 1px solid #b7c9cc; padding: 0 10px 0 4px; }
.lang select { flex: 1; min-width: 0; border: 0; background: none; appearance: none; padding: 0 4px; outline: 0; }
.auto { flex: none; width: 94px; margin-left: 11px; display: flex; flex-direction: column; line-height: 18px; padding-top: 6px; }
.knob { width: 11px; height: 11px; border-radius: 50%; background: #a5adba; margin-bottom: 2px; }
.auto-a { padding-left: 4px; white-space: nowrap; }
.auto-b { display: flex; align-items: center; gap: 6px; }
.moon { margin-left: 6px; }
.hist { margin-left: 23px; }

.editor { flex: none; height: 194px; display: flex; overflow: hidden; background: #fffffe; }
.code { flex: 1; min-width: 0; display: flex; flex-direction: column; justify-content: flex-end; overflow: hidden; font: 15px/22px "DejaVu Sans Mono", monospace; color: #333; }
.row { flex: none; height: 20px; display: flex; }
.ln { flex: none; width: 71px; padding-right: 26px; text-align: right; color: #237893; }
.src { white-space: pre; }
.src b { font-weight: 400; color: #1a1aff; }
.src em { font-style: normal; color: #008000; }
.src mark { display: inline-block; height: 20px; background: #e5e9f1; color: inherit; border-radius: 3px; }
.ind { display: inline-block; width: 4ch; height: 20px; border-left: 1px solid #d3d3d3; vertical-align: top; }
.minimap { flex: none; width: 14px; border-left: 1px solid #d8dcdc; padding-top: 114px; }
.minimap span { display: block; height: 2px; background: #424242; }

.status { flex: none; height: 30px; position: relative; border: solid #dfe6e7; border-width: 1px 0; text-align: right; padding: 5px 5px 0 0; font: 12px/18px "DejaVu Sans Mono", monospace; }
.rule { position: absolute; left: 0; right: 0; top: 14px; height: 1px; background: #d5e0e2; }
.collapse { position: absolute; z-index: 2; left: 177px; top: 1px; width: 38px; height: 38px; border-radius: 50%; border: 1px solid #b7c9cc; background: #fff; display: flex; align-items: center; justify-content: center; padding: 0; }
.tabs { flex: none; height: 24px; display: flex; overflow: hidden; font-size: 16px; font-weight: 600; line-height: 24px; color: #000; }
.tabs button { flex: none; border: 0; padding: 0; height: 64px; background: #fff; display: flex; justify-content: center; }
.tabs .t-test { width: 119px; background: #e7eeef; padding: 0 30px; text-align: left; justify-content: flex-start; margin-top: -4px; height: 68px; }
.tabs .t-custom { width: 122px; padding: 0 28px; margin-top: -3px; }
.tabs .t-run { width: 70px; background: #000; color: #fff; padding: 8px 0 0 9px; font-size: 14px; font-weight: 700; border-right: 1px solid #333; }
.tabs .t-up { width: 42px; background: #000; padding-top: 16px; }
.tabs .t-submit { width: 104px; background: #098436; color: #fff; font-size: 14px; font-weight: 700; }
.verdict { flex: none; height: 92px; background: #e7eeef; padding: 20px 30px; font-size: 19px; font-weight: 600; line-height: 26px; color: #000; }
.verdict span { color: #39424e; }
.verdict svg { display: inline-block; vertical-align: -2px; }

.results { flex: 1; min-height: 0; display: flex; border-bottom: 2px solid #e7eeef; }
.cases { flex: none; width: 197px; margin: 0; padding: 0; list-style: none; overflow: hidden; background: #e7eeef; border-right: 1px solid #d5dfe0; font-weight: 600; font-size: 16px; color: #0b8a35; }
.cases li { height: 59px; }
.cases a { height: 59px; display: flex; align-items: center; gap: 5px; padding: 0 0 2px 30px; }
.cases .fail { background: #fff; color: #dc2c4b; box-shadow: 0 3px 8px #c8d2d4; }
.out-wrap { flex: 1; min-width: 0; display: grid; grid-template-columns: minmax(0, 1fr) 17px; grid-template-rows: minmax(0, 1fr) 17px; }
.out { overflow: hidden; }
.out-inner { width: 268px; padding: 30px 0 0 30px; }
.out-label { font: 14px/20px "Open Sans", sans-serif; color: #576871; margin-bottom: 4px; }
.out-box { height: 39px; background: #f3f7f7; display: flex; align-items: center; font: bold 13px "DejaVu Sans Mono", monospace; color: #0e141e; }
.out-n { width: 31px; line-height: 39px; border-right: 1px solid #dfe6e7; text-align: center; color: #b7c9cc; }
.out-v { padding-left: 10px; }
.hidden-case { margin: 76px 0 0 -30px; display: flex; flex-direction: column; align-items: center; font: 26px/18px "Open Sans", sans-serif; color: #576871; }
.hbar { background: #f1f1f1; display: flex; }
.htrack { flex: 1; display: flex; align-items: center; }
.hthumb { width: 83px; height: 13px; background: #c1c1c1; }
.corner { background: #dcdcdc; }

/* Taskbar */
.taskbar { flex: none; height: 40px; display: flex; align-items: stretch; background: linear-gradient(90deg, #e8e8db 0, #e6e6da 55%, #e0ebab 61%, #e1edaa 72%, #ebecd4 78%, #ebebe4 86%, #eceae6 100%); color: #111; }
.start { width: 48px; }
.search { width: 344px; background: #fff; border: 1px solid #c6c6c6; display: flex; align-items: center; gap: 10px; padding-left: 11px; }
.search input { flex: 1; min-width: 0; border: 0; outline: 0; padding: 0; font-size: 14px; }
.search input::placeholder { color: #333; opacity: 1; }
.task { width: 48px; }
.app-b { width: 41px; margin: 0 4px; border-bottom: 2px solid transparent; }
.on { border-bottom-color: #058268; }
.chrome { background: #f6f5f1; width: 45px; margin: 0 3px; }
.task + .app-b { margin-left: 4px; }
.net { margin-left: auto; display: grid; grid-template-columns: 24px 61px; align-content: center; font-size: 10px; line-height: 13px; }
.net span:nth-child(even) { text-align: right; }
.tray { display: flex; align-items: center; gap: 10px; margin-left: 8px; }
.clock { width: 72px; text-align: center; font: 12px/18px "Open Sans", sans-serif; padding-top: 2px; }
.notif { width: 46px; padding: 12px 0 0 9px; position: relative; border-right: 1px solid #c4c4bd; margin-right: 4px; }
.count { position: absolute; left: 15px; top: 18px; width: 18px; height: 18px; border-radius: 50%; background: #ccccc8; border: 1px solid #999; font-size: 11px; line-height: 16px; text-align: center; }
```
